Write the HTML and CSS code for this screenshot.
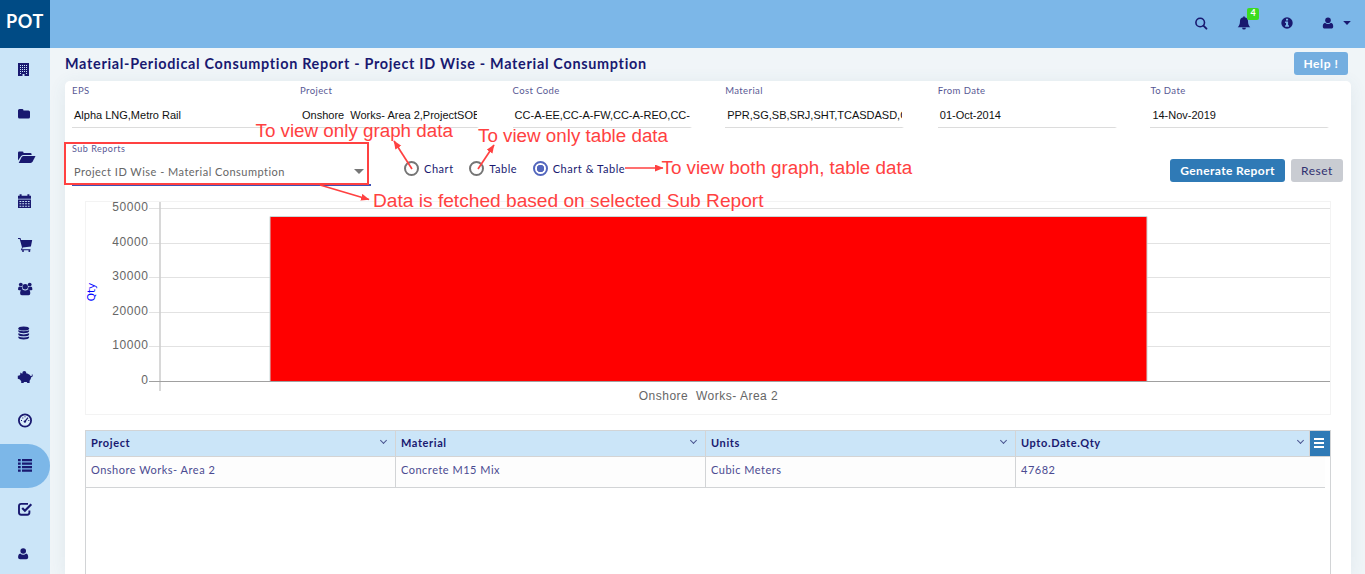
FILE: index.html
```html
<!DOCTYPE html>
<html lang="en">
<head>
<meta charset="utf-8">
<title>Material-Periodical Consumption Report</title>
<link rel="stylesheet" href="styles.css">
</head>
<body>
<header class="topbar">
  <div class="brand">POT</div>
  <nav class="tools">
    <svg class="tool search" viewBox="0 0 14 14"><circle cx="6.200" cy="6.500" r="4.300" fill="none" stroke="currentColor" stroke-width="1.600"/><path d="M9.400 9.700l3 3" stroke="currentColor" stroke-width="1.900" stroke-linecap="round"/></svg>
    <span class="bell-wrap"><svg class="tool" viewBox="0 0 14 14"><path d="M6.300.6a.8.8 0 0 1 1.400 0v.6C10 1.600 11 3.200 11 5c0 3.300.9 4.900 2.300 6.200H.7C2.100 9.900 3 8.300 3 5c0-1.800 1-3.400 3.300-3.800zM5.100 11.700h3.800a1.900 1.900 0 0 1-3.800 0z"/></svg><b class="badge">4</b></span>
    <svg class="tool info" viewBox="0 0 12 12"><circle cx="6" cy="6" r="5.700"/><path fill="#7cb7e8" d="M5 1.800h2.100v1.700H5zM4.100 4.500h3v3.800h.9v1.400H4.100V8.300H5V5.900h-.9z"/></svg>
    <svg class="tool person" viewBox="0 0 12 12"><circle cx="6" cy="3.300" r="2.800"/><path d="M3.100 5.700a4 4 0 0 0 5.800 0c1.700.3 2.300 1.700 2.300 3.700 0 1.300-.8 2.100-1.900 2.100H2.700c-1.100 0-1.900-.8-1.900-2.100 0-2 .6-3.400 2.300-3.700z"/></svg>
    <svg class="caret" viewBox="0 0 8 4"><path d="M.2 0h7.600L4 4z"/></svg>
  </nav>
</header>
<div class="shell">
  <aside class="sidebar">
    <a class="item"><svg width="12" height="14" viewBox="0 0 12 14"><path fill-rule="evenodd" d="M0 0h11v13H6.500v-2h-2v2H0zM2 2v1h1V2zM4 2v1h1V2zM6 2v1h1V2zM8 2v1h1V2zM2 4v1h1V4zM4 4v1h1V4zM6 4v1h1V4zM8 4v1h1V4zM2 6v1h1V6zM4 6v1h1V6zM6 6v1h1V6zM8 6v1h1V6zM2 8v1h1V8zM4 8v1h1V8zM6 8v1h1V8zM8 8v1h1V8zM2 10v1h1v-1zM8 10v1h1v-1z"/></svg></a>
    <a class="item"><svg width="14" height="14" viewBox="0 0 14 14"><path d="M0 3.500Q0 2 1.500 2h2.600q1.400 0 1.400 1.400H10.500Q12 3.400 12 5v5q0 1.500-1.500 1.500h-9Q0 11.500 0 10z"/></svg></a>
    <a class="item up"><svg width="18" height="14" viewBox="0 0 18 14"><path d="M0 10.500V2.800Q0 1.500 1.300 1.500h3Q5.600 1.500 5.600 2.900H12.300Q13.600 2.900 13.600 4.300V5H5.500Q3.900 5 3 6.300z"/><path d="M5.600 5.900H17.500L14.700 11.600Q14 13 12.500 13H.7L3.600 7.200Q4.300 5.900 5.600 5.900z"/></svg></a>
    <a class="item up"><svg width="14" height="14" viewBox="0 0 14 14"><path d="M0 1.800h1.600V.2h2v1.600h5.800V.2h2v1.600H13v2.900H0z"/><path fill-rule="evenodd" d="M0 5.500h13V14H0zM1.500 7v1h1.800V7zM4.300 7v1h1.800V7zM7.100 7v1h1.800V7zM9.900 7v1h1.700V7zM1.500 9.300v1h1.800v-1zM4.300 9.300v1h1.800v-1zM7.100 9.300v1h1.800v-1zM9.900 9.300v1h1.700v-1zM1.500 11.700v1h1.800v-1zM4.300 11.700v1h1.800v-1zM7.100 11.700v1h1.800v-1zM9.900 11.700v1h1.700v-1z"/></svg></a>
    <a class="item up"><svg width="15" height="14" viewBox="0 0 15 14"><path d="M0 0h2.500L3 2h11.200L12.900 8.600 4.700 9.600l-.6 1.700H12.500v1H2.800L4 9.200 1.700 1H0z"/><circle cx="5" cy="13" r="1"/><circle cx="11.300" cy="13" r="1"/></svg></a>
    <a class="item up"><svg width="15" height="14" viewBox="0 0 15 14"><circle cx="2.800" cy="2.600" r="1.900"/><circle cx="11.700" cy="2.600" r="1.900"/><circle cx="7.200" cy="4.800" r="2.700"/><path d="M0 7.300Q0 4.500 1.500 4.500q1.300.8 2.500.4 0 1.500.8 2.500Q3.500 7.400 2.800 8.300H1.200Q0 8.300 0 7.300zM14.400 7.300q0-2.800-1.500-2.800-1.300.8-2.500.4 0 1.500-.8 2.500 1.300 0 2 .9h1.600q1.200 0 1.200-1zM4.500 7.500q2.700 1.800 5.400 0Q12.300 7.500 12.300 11.300 12.300 13.200 10.600 13.200H3.800Q2.100 13.200 2.100 11.300 2.100 7.500 4.500 7.500z"/></svg></a>
    <a class="item up"><svg width="12" height="14" viewBox="0 0 12 14"><ellipse cx="5.700" cy="2.500" rx="5.400" ry="2.100"/><path d="M.3 4.200q5.400 2.300 10.800 0v1.100c0 2.600-10.800 2.600-10.800 0zM.3 7.300q5.400 2.300 10.800 0v1.100c0 2.600-10.800 2.600-10.800 0zM.3 10.400q5.400 2.300 10.800 0v1.100c0 2.600-10.800 2.600-10.800 0z"/></svg></a>
    <a class="item up"><svg class="pig" width="17" height="14" viewBox="0 0 17 14"><circle cx="7.300" cy="2.800" r="1.900"/><path d="M3.300 2.400 4.800 3.600Q9 2 12.600 4.700 13.500 5.700 14 6.200q1.200.1.800-1.700l.6-.2q1 2.600-1.300 3-.1 2.300-1.500 3.400V13H10.300L9.800 12H7l-.5 1H4.200V11.300L2.900 9.600.8 8.800V5.800L2.400 5.500l.9-1.100z"/></svg></a>
    <a class="item up"><svg width="15" height="15" viewBox="0 0 15 15"><circle cx="7" cy="7.500" r="6.100" fill="#fff" fill-opacity=".3" stroke="currentColor" stroke-width="1.800"/><path d="M7 8.400 10 4.600" stroke="currentColor" stroke-width="1.200"/><circle cx="6.900" cy="8.600" r="1.200"/><path d="M3 7h1v1H3zM4.300 4.500h1v1h-1zM6.500 3.200h1v1h-1zM10.300 7h1v1h-1z"/></svg></a>
    <a class="item up active"><svg width="15" height="14" viewBox="0 0 15 14"><path d="M0 1h2.700v2.200H0zM4 1h10v2.200H4zM0 4.500h2.700v2.200H0zM4 4.500h10v2.200H4zM0 8h2.700v2.200H0zM4 8h10v2.200H4zM0 11.500h2.700v2.200H0zM4 11.500h10v2.200H4z"/></svg></a>
    <a class="item up"><svg width="15" height="14" viewBox="0 0 15 14"><path fill="none" stroke="currentColor" stroke-width="1.900" d="M10 1.900H3.200Q1 1.900 1 4.100v6.400Q1 12.700 3.200 12.700H9.200q2.200 0 2.200-2.200V8.500"/><path fill="none" stroke="currentColor" stroke-width="2.200" d="M4.200 6l2.700 2.700L13.300 2.300"/></svg></a>
    <a class="item"><svg width="12" height="12" viewBox="0 0 12 12"><circle cx="5.200" cy="3" r="2.800"/><path d="M2.300 5.400a4 4 0 0 0 5.800 0c1.600.3 2.100 1.700 2.100 3.900 0 1.300-.8 2-1.900 2H2.100C.9 11.300.1 10.600.1 9.300c0-2.200.6-3.600 2.200-3.900z"/></svg></a>
  </aside>
  <main class="content">
    <div class="title-row"><h1>Material-Periodical Consumption Report - Project ID Wise - Material Consumption</h1><button class="btn help">Help !</button></div>
    <section class="card">
      <div class="fields">
        <label class="field"><span>EPS</span><div class="value">Alpha LNG,Metro Rail</div></label>
        <label class="field"><span>Project</span><div class="value">Onshore&nbsp; Works- Area 2,ProjectSOB</div></label>
        <label class="field"><span>Cost Code</span><div class="value">CC-A-EE,CC-A-FW,CC-A-REO,CC-</div></label>
        <label class="field"><span>Material</span><div class="value">PPR,SG,SB,SRJ,SHT,TCASDASD,C</div></label>
        <label class="field"><span>From Date</span><div class="value">01-Oct-2014</div></label>
        <label class="field"><span>To Date</span><div class="value">14-Nov-2019</div></label>
      </div>
      <div class="filters">
        <div class="sub"><span class="sub-label">Sub Reports</span><div class="select"><span>Project ID Wise - Material Consumption</span><i class="arrow"></i></div></div>
        <div class="radios">
          <span class="radio"><i class="ring"></i>Chart</span>
          <span class="radio"><i class="ring"></i>Table</span>
          <span class="radio"><i class="ring on"></i>Chart &amp; Table</span>
        </div>
        <div class="actions"><button class="btn generate">Generate Report</button><button class="btn reset">Reset</button></div>
      </div>
      <svg class="chart" width="1246" height="214" viewBox="0 0 1246 214">
        <rect x=".5" y=".5" width="1245" height="213" fill="none" stroke="#f3f3f3"/>
        <path d="M64 7.500h1181M64 42.500h1181M64 76.500h1181M64 111.500h1181M64 145.500h1181" stroke="#e2e2e2"/>
        <path d="M75 1v189" stroke="#cfcfcf" stroke-width="1.600"/>
        <rect x="185" y="16" width="877" height="164" fill="#f00"/>
        <path d="M185 180V15.500h877V180" fill="none" stroke="#c8d8d8"/>
        <path d="M64 180.500h1181" stroke="#a0a0a0"/>
        <g class="ticks"><text x="63.600" y="10">50000</text><text x="63.600" y="45">40000</text><text x="63.600" y="79">30000</text><text x="63.600" y="114">20000</text><text x="63.600" y="148">10000</text><text x="63.600" y="183">0</text></g>
        <text class="category" x="623.500" y="199">Onshore&#160; Works- Area 2</text>
        <text class="axis" transform="translate(10 91) rotate(-90)">Qty</text>
      </svg>
      <div class="grid">
        <div class="head"><div>Project<i class="chev"></i></div><div>Material<i class="chev"></i></div><div>Units<i class="chev"></i></div><div>Upto.Date.Qty<i class="chev"></i></div><div class="menu"><i></i><i></i><i></i></div></div>
        <div class="row"><div>Onshore Works- Area 2</div><div>Concrete M15 Mix</div><div>Cubic Meters</div><div>47682</div></div>
      </div>
    </section>
  </main>
</div>
<svg class="notes" width="1365" height="574" viewBox="0 0 1365 574">
  <defs><marker id="tip" markerUnits="userSpaceOnUse" markerWidth="9" markerHeight="8" refX="8" refY="3.500" orient="auto"><path d="M0 0 8.500 3.500 0 7z"/></marker></defs>
  <rect x="65" y="143" width="303" height="41"/>
  <g class="lines"><path d="M412 169 394 141"/><path d="M478 169 494 145"/><path d="M625 168H663"/><path d="M320 185 369 199.500"/></g>
  <text x="255.500" y="137">To view only graph data</text>
  <text x="478" y="142">To view only table data</text>
  <text x="661.500" y="174">To view both graph, table data</text>
  <text class="wide" x="373" y="207">Data is fetched based on selected Sub Report</text>
</svg>
</body>
</html>
```
FILE: styles.css
```css
* { box-sizing: border-box; }
body { margin: 0; height: 574px; overflow: hidden; font-family: Lato, "Liberation Sans", sans-serif; color: #191970; background: #f0f5f8; letter-spacing: .7px; }
svg { display: block; fill: currentColor; }
.topbar { display: flex; height: 48px; background: #7cb7e8; }
.brand { width: 50px; height: 48px; background: #004b85; color: #fff; font-size: 18px; font-weight: 700; line-height: 43px; padding-left: 6px; letter-spacing: .6px; }
.tools { display: flex; align-items: center; margin-left: auto; padding: 0 14px 3px 0; }
.tool { width: 14px; height: 14px; }
.search { margin-right: 29px; }
.bell-wrap { position: relative; margin-right: 30px; }
.badge { position: absolute; left: 10px; top: -8px; width: 12px; height: 12px; border-radius: 2px; background: #3bdc1f; color: #fff; font-size: 9px; line-height: 10px; text-align: center; letter-spacing: 0; }
.info { width: 12px; height: 12px; margin-right: 29px; }
.person { width: 12px; height: 12px; margin-right: 9px; }
.caret { width: 8px; height: 4px; }
.shell { display: flex; height: 526px; }
.sidebar { width: 50px; background: #cbe5f8; flex: none; }
.item { display: flex; height: 44px; align-items: center; padding-left: 18px; }
.item.up { padding-bottom: 3px; }
.item.active { background: #7cb7e8; border-radius: 0 22px 22px 0; }
.pig { margin-left: -1px; }
.content { flex: 1; padding: 0 14px 0 15px; min-width: 0; }
.title-row { display: flex; height: 33px; justify-content: space-between; align-items: flex-start; padding: 4px 3px 0 0; }
h1 { margin: 3px 0 0; font-size: 14.400px; line-height: 18px; font-weight: 700; letter-spacing: .7px; white-space: nowrap; }
.btn { border: 0; border-radius: 3px; height: 23px; padding: 0; font: 700 12px/23px Lato, sans-serif; letter-spacing: .6px; color: #fff; }
.help { width: 54px; background: #74aee0; }
.card { height: 493px; background: #fff; border-radius: 5px 5px 0 0; box-shadow: 0 3px 18px rgba(60,100,120,.09); padding: 3px 20px 0 7px; }
.fields { display: grid; grid-template-columns: 228px repeat(5, 212.600px); height: 62px; white-space: nowrap; }
.field span { display: block; font-size: 9.500px; line-height: 14px; opacity: .75; letter-spacing: .4px; }
.value { width: 179px; height: 30px; border-bottom: 1px solid #dcdcdc; font: 11px/34px "Liberation Sans", sans-serif; color: #111; letter-spacing: 0; padding-left: 2px; overflow: hidden; border-right: 2px solid transparent; }
.field:first-child .value { width: 194px; }
.filters { display: flex; height: 55px; }
.sub { width: 299px; height: 40px; border-bottom: 2px solid #3f51b5; }
.sub-label { display: block; font-size: 9px; line-height: 6px; opacity: .75; letter-spacing: .5px; }
.select { display: flex; justify-content: space-between; color: #666; font-size: 11px; line-height: 14px; letter-spacing: .48px; padding: 13px 7px 0 2px; }
.arrow { border: 5px solid transparent; border-top-color: #777; border-bottom: 0; height: 5px; margin-top: 4px; }
.radios { display: flex; padding: 14px 0 0 33px; font-size: 11px; height: 30px; align-items: center; letter-spacing: .55px; }
.radio { display: flex; align-items: center; margin-right: 15.500px; white-space: nowrap; }
.ring { width: 15px; height: 15px; border: 2px solid #757575; border-radius: 50%; margin-right: 5px; }
.ring.on { border-color: #5366bd; background: radial-gradient(circle, #5366bd 3.500px, #fff 4px); }
.actions { display: flex; gap: 6px; margin-left: auto; padding: 13px 0 0; margin-right: -12px; }
.generate { width: 115px; background: #2f7ab6; letter-spacing: .4px; }
.reset { width: 52px; background: #c9ccd2; color: #303070; font-weight: 400; letter-spacing: .5px; }
.chart { margin-left: 13px; }
.ticks, .category { font: 12px "Liberation Sans", sans-serif; fill: #666; letter-spacing: .6px; }
.ticks { text-anchor: end; }
.category { text-anchor: middle; letter-spacing: .5px; }
.axis { font: 10.500px "DejaVu Sans", sans-serif; fill: #00f; text-anchor: middle; letter-spacing: 0; }
.grid { margin: 15px 0 0 13px; width: 1246px; height: 144px; border: 1px solid #d2d4d6; border-bottom: 0; font-size: 11px; letter-spacing: .5px; }
.head, .row { display: grid; grid-template-columns: 310px 310px 310px 294px 20px; }
.head { height: 26px; line-height: 24px; font-weight: 700; background: #cbe5f8; border-bottom: 1px solid #d4d4d4; letter-spacing: .6px; }
.head > div { display: flex; justify-content: space-between; padding: 0 9px 0 5px; border-right: 1px solid #d4d4d4; }
.head > div:nth-child(4) { padding-right: 6px; }
.chev { width: 5px; height: 5px; margin-top: 7px; border: solid #4b5590; border-width: 0 1px 1px 0; transform: rotate(45deg); }
.head .menu { display: flex; flex-direction: column; justify-content: center; align-items: flex-start; gap: 2px; padding: 0 0 1px 4px; border: 0; background: #2f7ab6; }
.menu i { width: 10px; height: 2px; background: #fff; }
.row { grid-template-columns: 310px 310px 310px 309px; width: 1239px; height: 31px; border-bottom: 1px solid #d2d4d6; background: #fdfdfd; line-height: 26px; color: #4b4b91; }
.row div { padding-left: 5px; border-right: 1px solid #d2d4d6; }
.row div:last-child { border: 0; }
.notes { position: absolute; left: 0; top: 0; pointer-events: none; fill: #ff4141; font: 18.800px "Liberation Sans", sans-serif; letter-spacing: 0; }
.notes rect, .lines { fill: none; stroke: #ff4141; stroke-width: 2; }
.notes .wide { font-size: 19.150px; }
.lines { stroke-width: 1.700; }
.lines path { marker-end: url(#tip); }
```
